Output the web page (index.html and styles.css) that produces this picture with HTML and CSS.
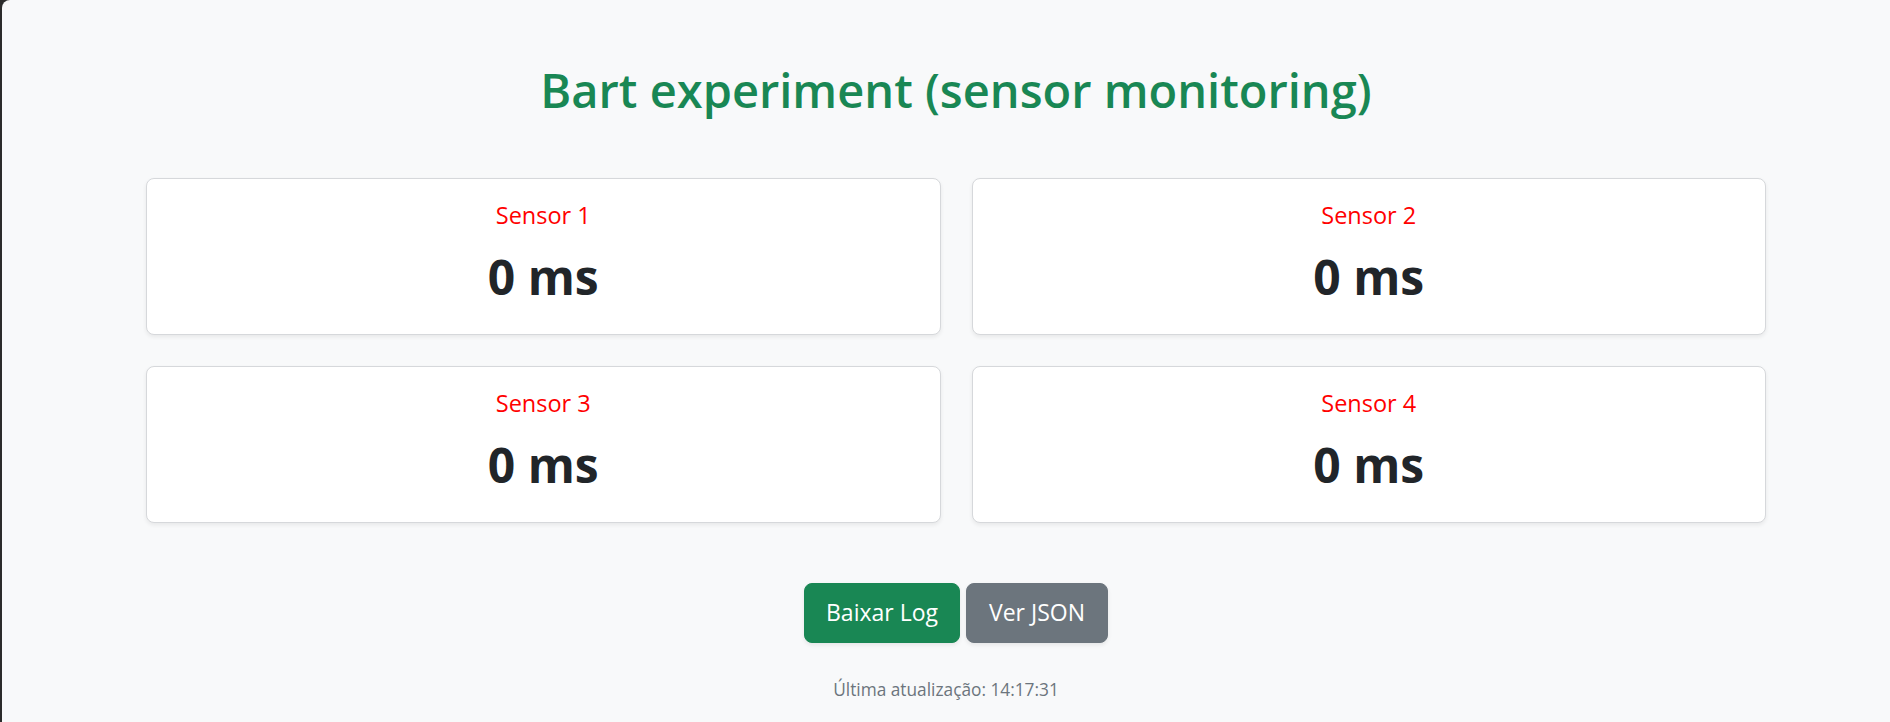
FILE: index.html
```html
<!DOCTYPE html>
<html lang="pt">
<head>
<meta charset="utf-8">
<title>Bart experiment</title>
<link rel="stylesheet" href="styles.css">
</head>
<body>
<div class="app">
  <main class="container">
    <h1 class="title">Bart experiment (sensor monitoring)</h1>
    <section class="grid">
      <div class="card"><div class="label">Sensor 1</div><div class="value">0 ms</div></div>
      <div class="card"><div class="label">Sensor 2</div><div class="value">0 ms</div></div>
      <div class="card"><div class="label">Sensor 3</div><div class="value">0 ms</div></div>
      <div class="card"><div class="label">Sensor 4</div><div class="value">0 ms</div></div>
    </section>
    <div class="actions">
      <button class="btn btn-success">Baixar Log</button>
      <button class="btn btn-secondary">Ver JSON</button>
    </div>
  </main>
  <p class="updated">Última atualização: 14:17:31</p>
</div>
</body>
</html>
```

FILE: styles.css
```css
html, body {
  margin: 0;
  padding: 0;
  height: 100%;
}
body {
  background: #2b2b2b;
  font-family: "Open Sans", "Noto Sans", sans-serif;
  overflow: hidden;
}
.app {
  margin-left: 2px;
  min-height: 100%;
  background: #f8f9fa;
  border-top-left-radius: 8px;
  overflow: hidden;
}
.container {
  width: 1620px;
  margin-left: 144px;
  padding-top: 62px;
}
.title {
  margin: 0 0 60px;
  text-align: center;
  color: #198754;
  font-size: 47px;
  font-weight: 600;
  line-height: 56px;
}
.grid {
  display: grid;
  grid-template-columns: 1fr 1fr;
  column-gap: 31px;
  row-gap: 31px;
}
.card {
  background: #fff;
  border: 1px solid #d6d8db;
  border-radius: 8px;
  box-shadow: 0 2px 4px rgba(0, 0, 0, 0.07);
  padding: 22px 16px 29px;
  text-align: center;
}
.label {
  color: #ff0000;
  font-size: 23.5px;
  line-height: 28px;
}
.value {
  margin-top: 19px;
  color: #212529;
  font-size: 48px;
  font-weight: 700;
  line-height: 57px;
}
.actions {
  margin-top: 60px;
  display: flex;
  justify-content: center;
  gap: 6px;
}
.btn {
  font-family: inherit;
  font-size: 23px;
  line-height: 35px;
  padding: 11.25px 21px;
  border: 1px solid transparent;
  border-radius: 8px;
  color: #fff;
  box-shadow: 0 2px 4px rgba(0, 0, 0, 0.08);
  cursor: pointer;
}
.btn-success {
  background: #198754;
  border-color: #198754;
}
.btn-secondary {
  padding-left: 22px;
  padding-right: 22px;
  background: #6c757d;
  border-color: #6c757d;
}
.updated {
  margin: 34px 0 0;
  text-align: center;
  color: #6c757d;
  font-size: 17.3px;
  line-height: 25px;
}
```
